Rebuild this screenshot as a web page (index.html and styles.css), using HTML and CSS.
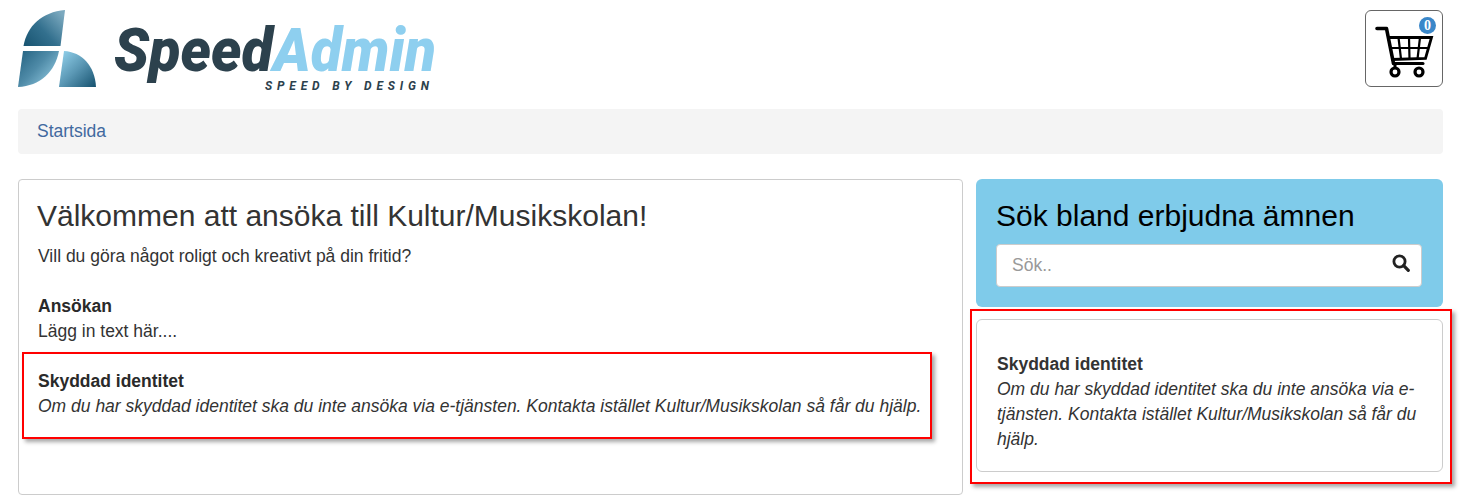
FILE: index.html
```html
<!DOCTYPE html>
<html lang="sv">
<head>
<meta charset="utf-8">
<title>SpeedAdmin</title>
<link rel="stylesheet" href="styles.css">
</head>
<body>
<header class="top">
  <svg class="logo" width="430" height="90" viewBox="18 8 430 90" xmlns="http://www.w3.org/2000/svg">
    <defs>
      <linearGradient id="g1" x1="0" y1="1" x2="1" y2="0.2">
        <stop offset="0" stop-color="#175370"/><stop offset="0.5" stop-color="#33708e"/><stop offset="1" stop-color="#7ba9bf"/>
      </linearGradient>
      <linearGradient id="g2" x1="0" y1="0" x2="1" y2="0.8">
        <stop offset="0" stop-color="#22607f"/><stop offset="0.5" stop-color="#4f8ba8"/><stop offset="1" stop-color="#96cde3"/>
      </linearGradient>
      <linearGradient id="g3" x1="0" y1="0" x2="1" y2="1">
        <stop offset="0" stop-color="#96d5ef"/><stop offset="0.5" stop-color="#5a97b4"/><stop offset="1" stop-color="#15516e"/>
      </linearGradient>
    </defs>
    <path fill="url(#g1)" d="M23.500 46C27 26 42 12 65 10L60.500 46Z"/>
    <path fill="url(#g2)" d="M23 51L59 51C55 72 40 86 18 87Z"/>
    <path fill="url(#g3)" d="M64 51C82 52 95 66 96 87L59 87Z"/>
    <text class="logo-a" x="114" y="71" textLength="159" lengthAdjust="spacingAndGlyphs">Speed</text>
    <text class="logo-b" x="273" y="71" textLength="163" lengthAdjust="spacingAndGlyphs">Admin</text>
    <text class="logo-c" x="265" y="90" textLength="164">SPEED BY DESIGN</text>
  </svg>
  <button class="cart" type="button" aria-label="Varukorg">
    <svg width="78" height="77" viewBox="0 0 78 77" xmlns="http://www.w3.org/2000/svg">
      <g fill="none" stroke="#000">
        <path stroke-width="3.600" stroke-linecap="round" stroke-linejoin="round" d="M12 18.500H21.500L28.500 53.500"/>
        <path stroke-width="2.800" d="M23 27.500H66.500L60.500 48.500L26.500 49.500"/>
        <path stroke-width="2.200" d="M33.500 27.500L36 49M44 27.500L44.500 49M55 27.500L52.500 49M24.500 38H63.500"/>
        <path stroke-width="3" stroke-linecap="round" d="M28.500 53.500H58"/>
        <path stroke-width="3" d="M30 53.500V58"/>
      </g>
      <circle cx="30" cy="62" r="4" fill="#fff" stroke="#000" stroke-width="3.200"/>
      <circle cx="54" cy="62" r="4" fill="#fff" stroke="#000" stroke-width="3.200"/>
    </svg>
    <span class="badge">0</span>
  </button>
</header>

<nav class="crumb"><a href="#">Startsida</a></nav>

<main class="cols">
  <section class="panel">
    <h1>Välkommen att ansöka till Kultur/Musikskolan!</h1>
    <p class="lead">Vill du göra något roligt och kreativt på din fritid?</p>
    <div class="block">
      <strong>Ansökan</strong>
      <div>Lägg in text här....</div>
    </div>
    <div class="block marked">
      <strong>Skyddad identitet</strong>
      <em>Om du har skyddad identitet ska du inte ansöka via e-tjänsten. Kontakta istället Kultur/Musikskolan så får du hjälp.</em>
    </div>
  </section>
  <aside class="side">
    <div class="search">
      <h2>Sök bland erbjudna ämnen</h2>
      <div class="field">
        <input type="text" placeholder="Sök..">
        <svg class="glass" width="18" height="18" viewBox="0 0 18 18" xmlns="http://www.w3.org/2000/svg">
          <circle cx="7.500" cy="7.500" r="5.600" fill="none" stroke="#222" stroke-width="2.800"/>
          <path d="M11.700 11.700L16.300 16.300" stroke="#222" stroke-width="3.200" stroke-linecap="round"/>
        </svg>
      </div>
    </div>
    <div class="card">
      <strong>Skyddad identitet</strong>
      <em>Om du har skyddad identitet ska du inte ansöka via e-tjänsten. Kontakta istället Kultur/Musikskolan så får du hjälp.</em>
      <span class="mark"></span>
    </div>
  </aside>
</main>
</body>
</html>
```
FILE: styles.css
```css
* { box-sizing: border-box; }
html, body { margin: 0; height: 500px; overflow: hidden; background: #fff; }
body {
  padding: 0 37px 0 18px;
  font: 17.500px/25px "Liberation Sans", Arial, sans-serif;
  color: #333;
}
strong, em { display: block; }

.top {
  display: flex;
  justify-content: space-between;
  align-items: flex-start;
  height: 109px;
  padding-top: 10px;
}
.logo { display: block; margin-top: -2px; overflow: visible; }
.logo-a, .logo-b {
  font: italic 900 60px Roboto, sans-serif;
}
.logo-a { fill: #2c414d; }
.logo-b { fill: #8ecfef; }
.logo-c {
  font: italic 700 12px Roboto, sans-serif;
  fill: #2c414d;
}
.cart {
  position: relative;
  width: 78px;
  height: 77px;
  padding: 0;
  background: #fff;
  border: 1px solid #666;
  border-radius: 6px;
}
.cart svg { position: absolute; left: -1px; top: -1px; }
.badge {
  position: absolute;
  left: 53px;
  top: 6px;
  width: 17px;
  height: 17px;
  border-radius: 50%;
  background: #3a87c9;
  color: #fff;
  font: 700 14px/17px "Liberation Serif", serif;
  text-align: center;
}

.crumb {
  height: 45px;
  padding: 10px 19px;
  background: #f4f4f4;
  border-radius: 4px;
}
.crumb a { color: #41699f; text-decoration: none; }

.cols {
  display: grid;
  grid-template-columns: 945px 467px;
  gap: 13px;
  margin-top: 25px;
}
.panel {
  height: 316px;
  padding: 0 18px;
  border: 1px solid #ccc;
  border-radius: 4px;
}
h1 {
  margin: 19px 0 0;
  font: 400 30px/33px "Liberation Sans", Arial, sans-serif;
}
.lead { margin: 12px 0 0 1px; line-height: 24px; }
.block { margin: 26px 0 0 1px; }
.panel strong { color: #2a2a2a; }
.marked {
  margin: 8px 12px 0 -15px;
  padding: 15px 4px 0 14px;
  height: 87px;
  border: 2px solid #f00;
  box-shadow: 3px 3px 4px rgba(0, 0, 0, 0.35);
}
.side { display: flex; flex-direction: column; gap: 12px; }
.search {
  height: 128px;
  padding: 19px 21px 0 20px;
  background: #7fcbea;
  border-radius: 6px;
}
h2 {
  margin: 0 0 11px;
  color: #000;
  font: 400 30px/35px "Liberation Sans", Arial, sans-serif;
}
.field { position: relative; }
.field input {
  display: block;
  width: 100%;
  height: 43px;
  padding: 0 15px;
  background: #fff;
  border: 1px solid #ccc;
  border-radius: 4px;
  font: 17.500px "Liberation Sans", Arial, sans-serif;
}
.field input::placeholder { color: #999; opacity: 1; }
.glass { position: absolute; right: 12px; top: 10px; }
.card {
  position: relative;
  height: 153px;
  padding: 32px 20px 0;
  border: 1px solid #ccc;
  border-radius: 6px;
}
.mark {
  position: absolute;
  inset: -11px -10px -13px -7px;
  border: 2px solid #f00;
  box-shadow: 3px 3px 4px rgba(0, 0, 0, 0.35);
  pointer-events: none;
}
```
